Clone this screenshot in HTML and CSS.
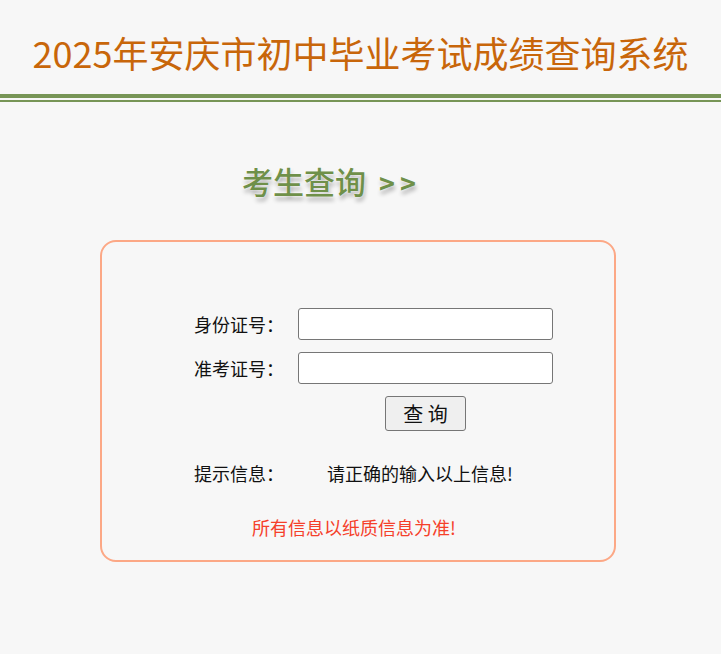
FILE: index.html
```html
<!doctype html>
<html>
	<head>
		<meta charset="utf-8">
		<title>2025年安庆市初中毕业考试成绩查询系统</title>
		<link rel="stylesheet" href="styles.css">
	</head>

	<body>
		<div class="header">
			<h1 class="title">2025年安庆市初中毕业考试成绩查询系统</h1>
		</div>
		<div class="rule"></div>

		<div class="main">
			<div class="section-title">
				考生查询 <span class="arrows">&gt;&gt;</span>
			</div>

			<div class="query-box">
				<form class="query-form" onsubmit="return false;">
					<label class="field-label" for="idcard">身份证号：</label>
					<input class="field-input" type="text" id="idcard" />

					<label class="field-label" for="examno">准考证号：</label>
					<input class="field-input" type="text" id="examno" />

					<span></span>
					<div class="button-cell">
						<button class="query-button" type="submit">查 询</button>
					</div>
				</form>

				<div class="hint-row">
					<span class="hint-label">提示信息：</span>
					<span class="hint-text">请正确的输入以上信息!</span>
				</div>

				<div class="notice">所有信息以纸质信息为准!</div>
			</div>
		</div>
	</body>
</html>
```

FILE: styles.css
```css
body {
	margin: 0;
	background-color: #f7f7f7;
	color: #111111;
	font-family: "Noto Sans CJK SC", "Noto Sans", sans-serif;
	font-size: 18px;
}

.header {
	height: 94px;
	display: flex;
	align-items: center;
	justify-content: center;
}

.title {
	margin: 0;
	padding-top: 10px;
	font-size: 36px;
	font-weight: 400;
	line-height: 1;
	color: #c8660a;
}

.rule {
	height: 2px;
	border-top: 4px solid #779556;
	border-bottom: 2px solid #779556;
}

.main {
	width: 516px;
	margin-left: 100px;
}

.section-title {
	margin-top: 59px;
	padding-left: 142px;
	height: 40px;
	line-height: 40px;
	font-size: 31px;
	font-weight: 500;
	color: #6f9049;
	text-shadow:
		0 0 2px #ffffff,
		1px 4px 4px rgba(0, 0, 0, 0.3);
}

.section-title .arrows {
	font-size: 27px;
	font-weight: 700;
	letter-spacing: 5px;
	margin-left: 6px;
}

.query-box {
	margin-top: 39px;
	border: 2px solid #fca886;
	border-radius: 16px;
	padding: 66px 0 21px 92px;
}

.query-form {
	display: grid;
	grid-template-columns: 104px 255px;
	row-gap: 12px;
	align-items: center;
}

.field-label {
	line-height: 24px;
}

.field-input {
	box-sizing: border-box;
	width: 255px;
	height: 32px;
	margin: 0;
	border: 1px solid #767676;
	border-radius: 3px;
	background-color: #ffffff;
}

.button-cell {
	display: flex;
	justify-content: center;
}

.query-button {
	width: 81px;
	height: 35px;
	padding: 0;
	border: 1px solid #767676;
	border-radius: 3px;
	background-color: #efefef;
	color: #111111;
	font-family: inherit;
	font-size: 20px;
	line-height: 1;
}

.hint-row {
	display: flex;
	margin-top: 30px;
	line-height: 24px;
}

.hint-label {
	width: 133px;
}

.notice {
	margin-top: 30px;
	padding-right: 100px;
	line-height: 24px;
	text-align: center;
	color: #f5402a;
}
```
